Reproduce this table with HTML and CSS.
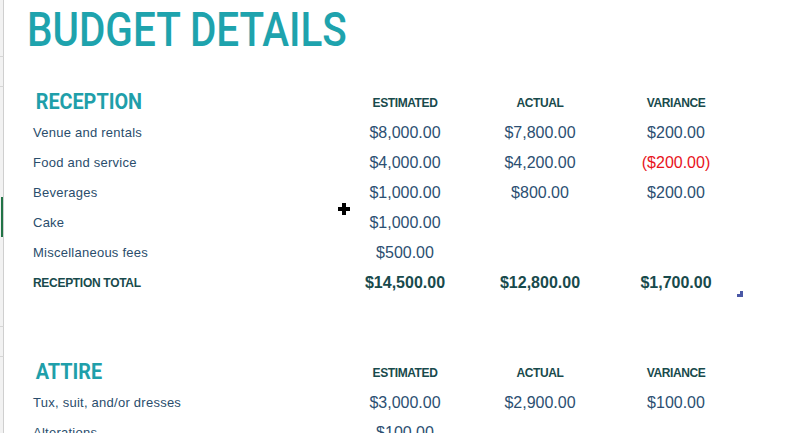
FILE: index.html
```html
<!DOCTYPE html>
<html>
<head>
<meta charset="utf-8">
<link rel="stylesheet" href="styles.css">
</head>
<body>
<div class="sheet">
  <div class="row title-row">
    <div class="rh"></div>
    <div class="title-cell"><h1 class="title">BUDGET DETAILS</h1></div>
  </div>
  <div class="row"><div class="rh"></div></div>

  <div class="row">
    <div class="rh"></div>
    <div class="label"><h2 class="section">RECEPTION</h2></div>
    <div class="col head">ESTIMATED</div>
    <div class="col head">ACTUAL</div>
    <div class="col head">VARIANCE</div>
  </div>
  <div class="row">
    <div class="rh"></div>
    <div class="label item">Venue and rentals</div>
    <div class="col num">$8,000.00</div>
    <div class="col num">$7,800.00</div>
    <div class="col num">$200.00</div>
  </div>
  <div class="row">
    <div class="rh"></div>
    <div class="label item">Food and service</div>
    <div class="col num">$4,000.00</div>
    <div class="col num">$4,200.00</div>
    <div class="col num neg">($200.00)</div>
  </div>
  <div class="row">
    <div class="rh"></div>
    <div class="label item">Beverages</div>
    <div class="col num">$1,000.00</div>
    <div class="col num">$800.00</div>
    <div class="col num">$200.00</div>
  </div>
  <div class="row">
    <div class="rh"></div>
    <div class="label item">Cake</div>
    <div class="col num">$1,000.00</div>
    <div class="col num"></div>
    <div class="col num"></div>
  </div>
  <div class="row">
    <div class="rh"></div>
    <div class="label item">Miscellaneous fees</div>
    <div class="col num">$500.00</div>
    <div class="col num"></div>
    <div class="col num"></div>
  </div>
  <div class="row">
    <div class="rh"></div>
    <div class="label total-label">RECEPTION TOTAL</div>
    <div class="col total">$14,500.00</div>
    <div class="col total">$12,800.00</div>
    <div class="col total">$1,700.00</div>
  </div>
  <div class="row"><div class="rh"></div></div>
  <div class="row"><div class="rh"></div></div>

  <div class="row">
    <div class="rh"></div>
    <div class="label"><h2 class="section">ATTIRE</h2></div>
    <div class="col head">ESTIMATED</div>
    <div class="col head">ACTUAL</div>
    <div class="col head">VARIANCE</div>
  </div>
  <div class="row">
    <div class="rh"></div>
    <div class="label item">Tux, suit, and/or dresses</div>
    <div class="col num">$3,000.00</div>
    <div class="col num">$2,900.00</div>
    <div class="col num">$100.00</div>
  </div>
  <div class="row">
    <div class="rh"></div>
    <div class="label item">Alterations</div>
    <div class="col num">$100.00</div>
    <div class="col num"></div>
    <div class="col num"></div>
  </div>

  <div class="sel-mark"></div>
  <svg class="cursor" width="12" height="12" viewBox="0 0 12 12"><path d="M4 0h4v4h4v4H8v4H4V8H0V4h4z" fill="#000"/></svg>
  <svg class="handle" width="6" height="6" viewBox="0 0 6 6"><path d="M3 0h3v6H0V3h3z" fill="#4a58a6"/></svg>
</div>
</body>
</html>
```

FILE: styles.css
```css
html, body {
  margin: 0;
  padding: 0;
  background: #ffffff;
}
body {
  font-family: "Liberation Sans", Arial, sans-serif;
  width: 799px;
  height: 433px;
  overflow: hidden;
}
.sheet {
  position: relative;
}
.row {
  display: grid;
  grid-template-columns: 4px 336px 130px 140px 132px;
  height: 30px;
  line-height: 30px;
}
.title-row {
  height: 57px;
}
.rh {
  background: #f2f2f2;
  border-right: 1px solid #cfcfcf;
  border-bottom: 1px solid #d6d6d6;
  box-sizing: border-box;
}
.title-cell {
  grid-column: 2 / 6;
  padding-left: 23px;
  padding-top: 2px;
}
.title {
  margin: 0;
  font-family: Roboto, "Liberation Sans", sans-serif;
  font-weight: 500;
  font-size: 49px;
  line-height: 55px;
  color: #1ea3ad;
  transform: scaleX(0.825);
  transform-origin: left center;
  white-space: nowrap;
}
.label {
  padding-left: 29px;
  white-space: nowrap;
}
.section {
  margin: 0;
  font-family: Roboto, "Liberation Sans", sans-serif;
  font-weight: 700;
  font-size: 22px;
  line-height: 30px;
  color: #1f9faa;
  transform: scaleX(0.9);
  transform-origin: left center;
  padding-left: 3px;
}
.col {
  text-align: center;
  white-space: nowrap;
}
.head {
  font-size: 12px;
  font-weight: 700;
  letter-spacing: -0.4px;
  color: #184a4c;
  padding-top: 1px;
}
.item {
  font-size: 13px;
  letter-spacing: 0.25px;
  color: #2a4d6c;
  padding-top: 1px;
}
.num {
  font-size: 16px;
  color: #2c4f72;
  padding-top: 1px;
}
.neg {
  color: #e8141c;
}
.total-label {
  font-size: 12px;
  font-weight: 700;
  letter-spacing: -0.3px;
  color: #184a4c;
  padding-top: 1px;
}
.total {
  font-size: 16px;
  font-weight: 700;
  color: #184a4c;
  padding-top: 1px;
}
.sel-mark {
  position: absolute;
  left: 1px;
  top: 197px;
  width: 2px;
  height: 40px;
  background: #217346;
}
.cursor {
  position: absolute;
  left: 338px;
  top: 203px;
}
.handle {
  position: absolute;
  left: 737px;
  top: 291px;
}
```
